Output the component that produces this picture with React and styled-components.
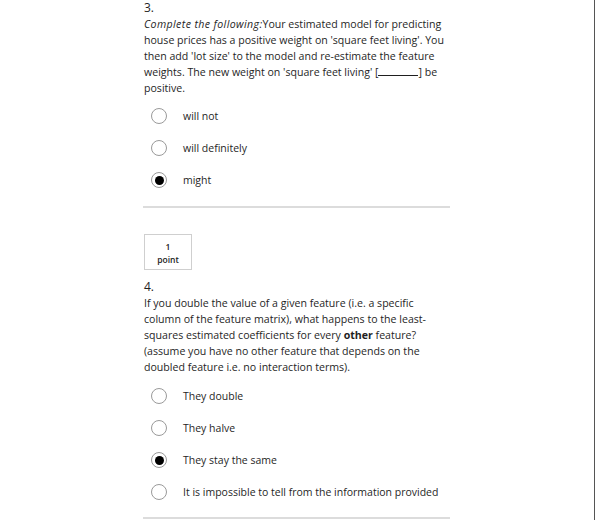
import React from 'react';
import styled, { createGlobalStyle } from 'styled-components';

const GlobalStyle = createGlobalStyle`
  html, body {
    margin: 0;
    padding: 0;
    background: #fff;
  }
  body {
    font-family: 'Open Sans', 'Liberation Sans', sans-serif;
    color: #1f1f1f;
  }
`;

const Page = styled.div`
  width: 594px;
  height: 520px;
  overflow: hidden;
  border-right: 1px solid #555;
  background: #fff;
`;

const Column = styled.div`
  width: 307px;
  margin-left: 143px;
`;

const Question = styled.div`
  padding-left: 1px;
`;

const Number = styled.div`
  font-size: 12px;
  line-height: 16px;
  margin-top: ${(p) => p.top || '0'};
`;

const Prompt = styled.div`
  width: 303px;
  font-size: 10.6px;
  line-height: 16px;

  em {
    font-style: italic;
    letter-spacing: 0.38px;
  }
  strong {
    font-weight: 700;
  }
`;

const Blank = styled.span`
  display: inline-block;
  width: 40px;
  border-bottom: 1px solid #1f1f1f;
  height: 10px;
  vertical-align: baseline;
`;

const Options = styled.div`
  display: flex;
  flex-direction: column;
  gap: 14px;
  padding: ${(p) => p.pad || '12px 0 0 8px'};
`;

const Option = styled.label`
  display: flex;
  align-items: center;
  gap: 16px;
  font-size: 10.5px;
  height: 18px;
`;

const Radio = styled.span`
  width: 16px;
  height: 16px;
  border-radius: 50%;
  border: 1px solid #9a9a9a;
  box-sizing: border-box;
  display: flex;
  align-items: center;
  justify-content: center;
  background: #fff;

  &::after {
    content: '';
    display: ${(p) => (p.checked ? 'block' : 'none')};
    width: 9px;
    height: 9px;
    border-radius: 50%;
    background: #000;
  }
`;

const Divider = styled.hr`
  border: none;
  height: 2px;
  background: #dcdcdc;
  margin: ${(p) => p.margin || '0'};
`;

const PointBox = styled.div`
  width: 48px;
  height: 36px;
  box-sizing: border-box;
  border: 1px solid #cfcfcf;
  margin-left: 1px;
  padding-top: 2px;
  display: flex;
  flex-direction: column;
  align-items: center;
  justify-content: center;
  font-size: 8.5px;
  line-height: 13px;
  font-weight: 600;
  color: #222;
`;

const q3 = ['will not', 'will definitely', 'might'];
const q4 = [
  'They double',
  'They halve',
  'They stay the same',
  'It is impossible to tell from the information provided',
];

export default function App() {
  return (
    <>
      <GlobalStyle />
      <Page>
        <Column>
          <Question>
            <Number>3.</Number>
            <Prompt>
              <em>Complete the following:</em>Your estimated model for predicting house
              prices has a positive weight on 'square feet living'. You then add 'lot size'
              to the model and re-estimate the feature weights. The new weight on 'square
              feet living' [<Blank />] be positive.
            </Prompt>
          </Question>
          <Options pad="11px 0 0 8px">
            {q3.map((t, i) => (
              <Option key={t}>
                <Radio checked={i === 2} />
                {t}
              </Option>
            ))}
          </Options>
          <Divider margin="17px 0 26px 0" />
          <PointBox>
            <span>1</span>
            <span>point</span>
          </PointBox>
          <Question>
            <Number top="9px">4.</Number>
            <Prompt>
              If you double the value of a given feature (i.e. a specific column of the
              feature matrix), what happens to the least-squares estimated coefficients for
              every <strong>other</strong> feature? (assume you have no other feature that
              depends on the doubled feature i.e. no interaction terms).
            </Prompt>
          </Question>
          <Options pad="12px 0 0 8px">
            {q4.map((t, i) => (
              <Option key={t}>
                <Radio checked={i === 2} />
                {t}
              </Option>
            ))}
          </Options>
          <Divider margin="16px 0 0 0" />
        </Column>
      </Page>
    </>
  );
}
